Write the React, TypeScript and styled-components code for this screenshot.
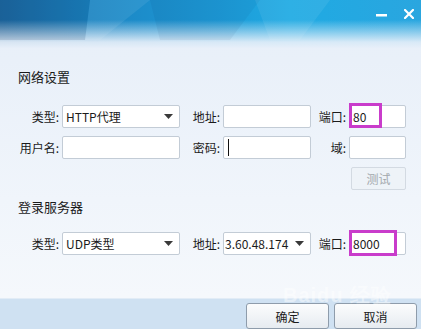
import React from "react";
import styled, { createGlobalStyle } from "styled-components";

const Global = createGlobalStyle`
  html, body { margin: 0; padding: 0; }
  body { font-family: "Noto Sans CJK SC", "Noto Sans", sans-serif; }
`;

const Window = styled.div`
  position: relative;
  width: 421px;
  height: 329px;
  overflow: hidden;
  display: flex;
  flex-direction: column;
  background: linear-gradient(180deg, #e7eff9 0px, #e9f0f9 60px, #f0f5fb 200px, #f5f8fc 296px);
  font-size: 12px;
  color: #1b1b1b;
`;

const Header = styled.div`
  position: relative;
  height: 48px;
  flex: none;
  display: flex;
  justify-content: flex-end;
  align-items: flex-start;
  padding: 7px 5px 0 0;
  box-sizing: border-box;
  gap: 14px;
  background:
    linear-gradient(180deg, rgba(231,239,249,0) 0px, rgba(231,239,249,0) 20px, rgba(231,239,249,0.5) 32px, rgba(231,239,249,0.92) 42px, #e7eff9 48px),
    linear-gradient(90deg, #1e6aa3 0px, #1b84c2 90px, #1d97d4 200px, #1faae3 290px, #2aa6df 421px);
`;

const Facets = styled.svg`
  position: absolute;
  left: 0;
  top: 0;
`;

const WinButton = styled.button`
  position: relative;
  width: 14px;
  height: 14px;
  padding: 0;
  border: 0;
  background: transparent;
  display: flex;
  align-items: center;
  justify-content: center;
`;

const Content = styled.div`
  flex: 1;
  display: flex;
  flex-direction: column;
  padding: 20px 0 0 18px;
`;

const SectionTitle = styled.div<{ $mt?: number }>`
  font-size: 13px;
  line-height: 18px;
  margin-top: ${(p) => p.$mt ?? 0}px;
`;

const FormGrid = styled.div<{ $mt: number }>`
  display: grid;
  grid-template-columns: 44px 118px 43px 88px 38px 57px;
  grid-auto-rows: 23px;
  row-gap: 8px;
  margin-top: ${(p) => p.$mt}px;
`;

const Label = styled.div`
  display: flex;
  align-items: center;
  justify-content: flex-end;
  padding-right: 3px;
  white-space: nowrap;
  font-size: 12px;
`;

const FieldWrap = styled.div`
  position: relative;
`;

const Input = styled.div`
  box-sizing: border-box;
  height: 23px;
  background: #fff;
  border: 1px solid #c3ccd6;
  border-radius: 2px;
  display: flex;
  align-items: center;
  padding-left: 3px;
  font-family: "Noto Sans CJK SC", "Noto Sans", sans-serif;
  font-size: 12px;
  overflow: hidden;
  white-space: nowrap;
`;

const SelectBox = styled(Input)<{ $pl?: number }>`
  justify-content: space-between;
  padding-left: ${(p) => p.$pl ?? 3}px;
  padding-right: 6px;
`;

const Caret = styled.div`
  width: 1px;
  height: 17px;
  background: #111;
  margin-left: 1px;
`;

const Highlight = styled.div<{ $w: number; $top: number; $h: number }>`
  position: absolute;
  left: 0;
  top: ${(p) => p.$top}px;
  width: ${(p) => p.$w}px;
  height: ${(p) => p.$h}px;
  box-sizing: border-box;
  border: 3px solid #c93ccb;
  pointer-events: none;
`;

const TestButton = styled.div`
  grid-column: 6;
  box-sizing: border-box;
  height: 23px;
  margin-left: 2px;
  border: 1px solid #d3dae2;
  border-radius: 2px;
  background: #eef3f8;
  color: #a3a8ad;
  display: flex;
  align-items: center;
  justify-content: center;
`;

const Footer = styled.div`
  flex: none;
  height: 31px;
  background: #cfe1f2;
  border-top: 1px solid #e2ecf6;
  box-sizing: border-box;
  display: flex;
  justify-content: flex-end;
  align-items: flex-start;
  gap: 5px;
  padding: 4px 4px 0 0;
`;

const DialogButton = styled.button`
  width: 83px;
  height: 26px;
  box-sizing: border-box;
  border: 1px solid #8e9cab;
  border-radius: 3px;
  background: linear-gradient(180deg, #fbfcfd 0%, #f1f4f7 50%, #e6ebf0 100%);
  font-family: "Noto Sans CJK SC", "Noto Sans", sans-serif;
  font-size: 12px;
  color: #1b1b1b;
  padding: 0;
`;

const Watermark = styled.div`
  position: absolute;
  left: 283px;
  top: 282px;
  font-family: "Liberation Sans", Arial, sans-serif;
  font-weight: bold;
  font-size: 20px;
  color: rgba(255, 255, 255, 0.45);
  letter-spacing: 1px;
  pointer-events: none;
`;

const DropArrow = () => (
  <svg width="9" height="5" viewBox="0 0 9 5">
    <path d="M0 0 H9 L4.5 5 Z" fill="#3a3a3a" />
  </svg>
);

export default function App() {
  return (
    <>
      <Global />
      <Window>
        <Header>
          <Facets width="421" height="48" viewBox="0 0 421 48">
            <polygon points="90,0 150,0 100,40 85,40" fill="rgba(255,255,255,0.08)" />
            <polygon points="150,0 260,0 230,40 160,40" fill="rgba(0,40,90,0.06)" />
            <polygon points="255,0 330,0 300,40 270,40" fill="rgba(255,255,255,0.07)" />
            <polygon points="0,0 90,0 85,40 0,40" fill="rgba(0,30,70,0.12)" />
          </Facets>
          <WinButton aria-label="minimize">
            <svg width="11" height="14" viewBox="0 0 11 14">
              <rect x="0" y="7" width="11" height="2.5" fill="#fff" />
            </svg>
          </WinButton>
          <WinButton aria-label="close">
            <svg width="10" height="10" viewBox="0 0 10 10">
              <path d="M1 1 L9 9 M9 1 L1 9" stroke="#fff" strokeWidth="2.2" strokeLinecap="square" />
            </svg>
          </WinButton>
        </Header>
        <Content>
          <SectionTitle>网络设置</SectionTitle>
          <FormGrid $mt={19}>
            <Label>类型:</Label>
            <SelectBox>
              <span>HTTP代理</span>
              <DropArrow />
            </SelectBox>
            <Label>地址:</Label>
            <Input />
            <Label>端口:</Label>
            <FieldWrap>
              <Input>80</Input>
              <Highlight $w={33} $top={-2} $h={25} />
            </FieldWrap>

            <Label>用户名:</Label>
            <Input />
            <Label>密码:</Label>
            <Input>
              <Caret />
            </Input>
            <Label>域:</Label>
            <Input />

            <TestButton>测试</TestButton>
          </FormGrid>

          <SectionTitle $mt={8}>登录服务器</SectionTitle>
          <FormGrid $mt={16}>
            <Label>类型:</Label>
            <SelectBox>
              <span>UDP类型</span>
              <DropArrow />
            </SelectBox>
            <Label>地址:</Label>
            <SelectBox $pl={1}>
              <span>3.60.48.174</span>
              <DropArrow />
            </SelectBox>
            <Label>端口:</Label>
            <FieldWrap>
              <Input>8000</Input>
              <Highlight $w={48} $top={-2} $h={26} />
            </FieldWrap>
          </FormGrid>
        </Content>
        <Watermark>Baidu 经验</Watermark>
        <Footer>
          <DialogButton>确定</DialogButton>
          <DialogButton>取消</DialogButton>
        </Footer>
      </Window>
    </>
  );
}
